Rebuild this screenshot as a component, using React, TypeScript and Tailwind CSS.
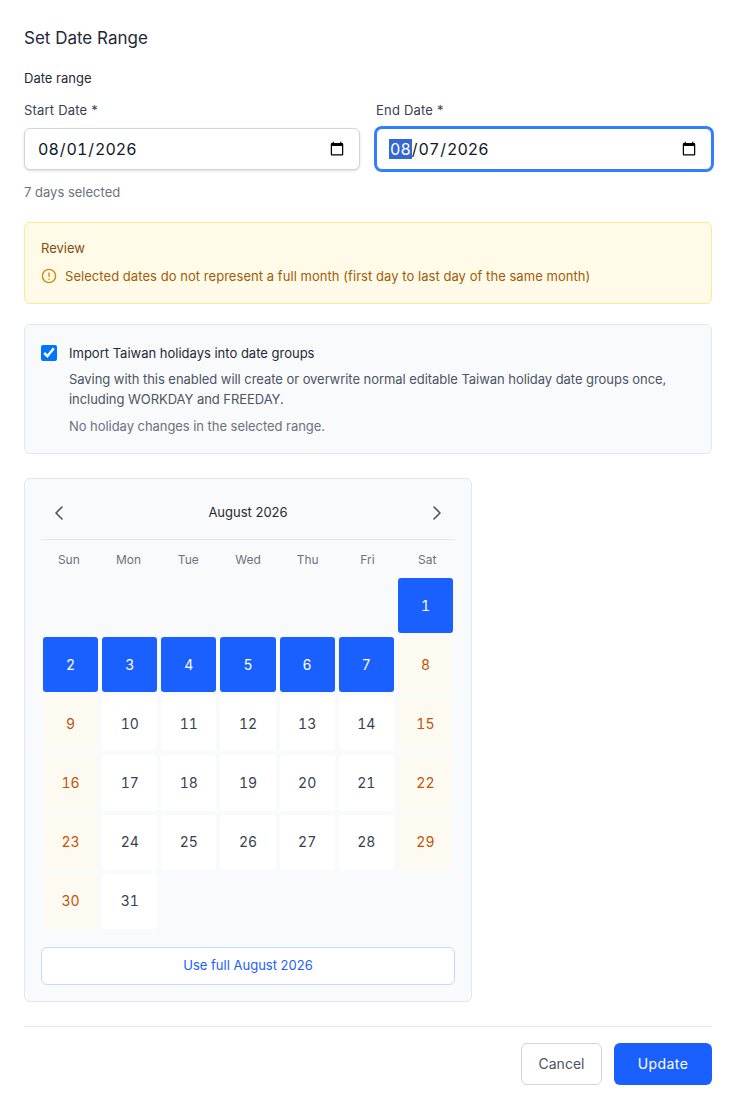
import { useEffect, useRef } from 'react';

const weekdays = ['Sun', 'Mon', 'Tue', 'Wed', 'Thu', 'Fri', 'Sat'];
const days = Array.from({ length: 31 }, (_, i) => i + 1);

function DayCell({ day }: { day: number }) {
  const weekday = (day + 5) % 7;
  const weekend = weekday === 0 || weekday === 6;
  const selected = day <= 7;
  let tone = 'bg-white text-[#374151]';
  if (weekend) tone = 'bg-[#fdfbf1] text-[#c2540a]';
  if (selected) tone = 'bg-[#1a60ff] text-white';
  return (
    <button className={`aspect-square flex items-center justify-center rounded-[3px] text-sm tabular-nums ${tone}`}>
      {day}
    </button>
  );
}

function Chevron({ d }: { d: string }) {
  return (
    <button className="w-6 h-6 flex items-center justify-center text-[#4b5563]">
      <svg width="24" height="24" viewBox="0 0 24 24" fill="none" stroke="currentColor" strokeWidth="1.6" strokeLinecap="round" strokeLinejoin="round">
        <path d={d} />
      </svg>
    </button>
  );
}

export default function App() {
  const endRef = useRef<HTMLInputElement>(null);

  useEffect(() => {
    endRef.current?.focus();
  }, []);

  return (
    <div className="w-[736px] h-[1109px] bg-white rounded-b-lg px-6 pt-7 text-[#111827] font-[380] font-['Inter','Liberation_Sans',sans-serif]">
      <h2 className="text-[17px] leading-5 text-[#1f2937]">Set Date Range</h2>
      <div className="mt-[22px] text-[13px] leading-4 text-[#1f2937]">Date range</div>

      <div className="mt-4 grid grid-cols-2 gap-4">
        <label className="block">
          <span className="block text-[13px] leading-4 tracking-[0.2px] text-[#374151]">Start Date *</span>
          <input
            type="date"
            defaultValue="2026-08-01"
            className="mt-2.5 w-full h-[42px] px-3 bg-white border border-[#d1d5db] rounded-md shadow-sm text-base tabular-nums text-[#111827] outline-none"
          />
        </label>
        <label className="block">
          <span className="block text-[13px] leading-4 tracking-[0.2px] text-[#374151]">End Date *</span>
          <input
            ref={endRef}
            type="date"
            defaultValue="2026-08-07"
            className="mt-2.5 w-full h-[42px] px-3 bg-white border border-[#d1d5db] rounded-md shadow-sm text-base tabular-nums text-[#111827] focus:outline-none focus:border-[#2f7fff] focus:ring-2 focus:ring-[#2f7fff]"
          />
        </label>
      </div>

      <div className="mt-3.5 text-[13px] leading-4 text-[#6b7280]">7 days selected</div>

      <div className="mt-[22px] h-[82px] bg-[#fffbe8] border border-[#fdeb8e] rounded-md px-4 pt-[17px]">
        <div className="text-[13px] leading-4 text-[#854d0e]">Review</div>
        <div className="mt-3 flex items-center gap-2 text-[13px] leading-4 tracking-[0.05px] text-[#a15c0a]">
          <svg width="16" height="16" viewBox="0 0 16 16" fill="none" stroke="#d08a12" strokeWidth="1.4">
            <circle cx="8" cy="8" r="6.6" />
            <path d="M8 4.4v4.4M8 10.6v1.1" />
          </svg>
          <span>Selected dates do not represent a full month (first day to last day of the same month)</span>
        </div>
      </div>

      <div className="mt-5 h-[130px] bg-[#f9fafb] border border-[#e5e7eb] rounded-md px-4 pt-5">
        <label className="flex items-center gap-3">
          <input type="checkbox" defaultChecked className="w-4 h-4 m-0 accent-[#0075ff]" />
          <span className="text-[13px] leading-4 text-[#1f2937]">Import Taiwan holidays into date groups</span>
        </label>
        <p className="mt-2 ml-7 text-[13px] leading-5 tracking-[-0.05px] text-[#4b5563]">
          Saving with this enabled will create or overwrite normal editable Taiwan holiday date groups once, including WORKDAY and FREEDAY.
        </p>
        <p className="mt-[7px] ml-7 text-[13px] leading-5 tracking-[-0.05px] text-[#6b7280]">No holiday changes in the selected range.</p>
      </div>

      <div className="mt-6 w-[448px] h-[524px] bg-[#f9fafb] border border-[#e5e7eb] rounded-md px-4 pt-4">
        <div className="h-[45px] flex items-start justify-between border-b border-[#e5e7eb] px-1.5">
          <div className="h-9 flex items-center"><Chevron d="m15 18-6-6 6-6" /></div>
          <span className="h-9 flex items-center text-[13px] text-[#1f2937]">August 2026</span>
          <div className="h-9 flex items-center"><Chevron d="m9 18 6-6-6-6" /></div>
        </div>

        <div className="-mx-0.5 mt-3 grid grid-cols-7 text-center text-xs leading-4 text-[#6b7280]">
          {weekdays.map(d => (
            <div key={d}>{d}</div>
          ))}
        </div>

        <div className="mt-2.5 px-0.5 grid grid-cols-7 gap-1">
          {Array.from({ length: 6 }, (_, i) => (
            <div key={i} />
          ))}
          {days.map(d => (
            <DayCell key={d} day={d} />
          ))}
        </div>

        <button className="mt-[18px] w-full h-[38px] bg-white border border-[#bfdbfe] rounded-md text-[13px] text-[#1a60ff]">
          Use full August 2026
        </button>
      </div>

      <div className="mt-6 pt-4 border-t border-[#e5e7eb] flex justify-end gap-3">
        <button className="w-[81px] h-[42px] bg-white border border-[#d1d5db] rounded-md text-sm text-[#4b5563]">Cancel</button>
        <button className="w-[98px] h-[42px] bg-[#1a60ff] rounded-md text-sm tracking-[0.4px] text-white">Update</button>
      </div>
    </div>
  );
}
